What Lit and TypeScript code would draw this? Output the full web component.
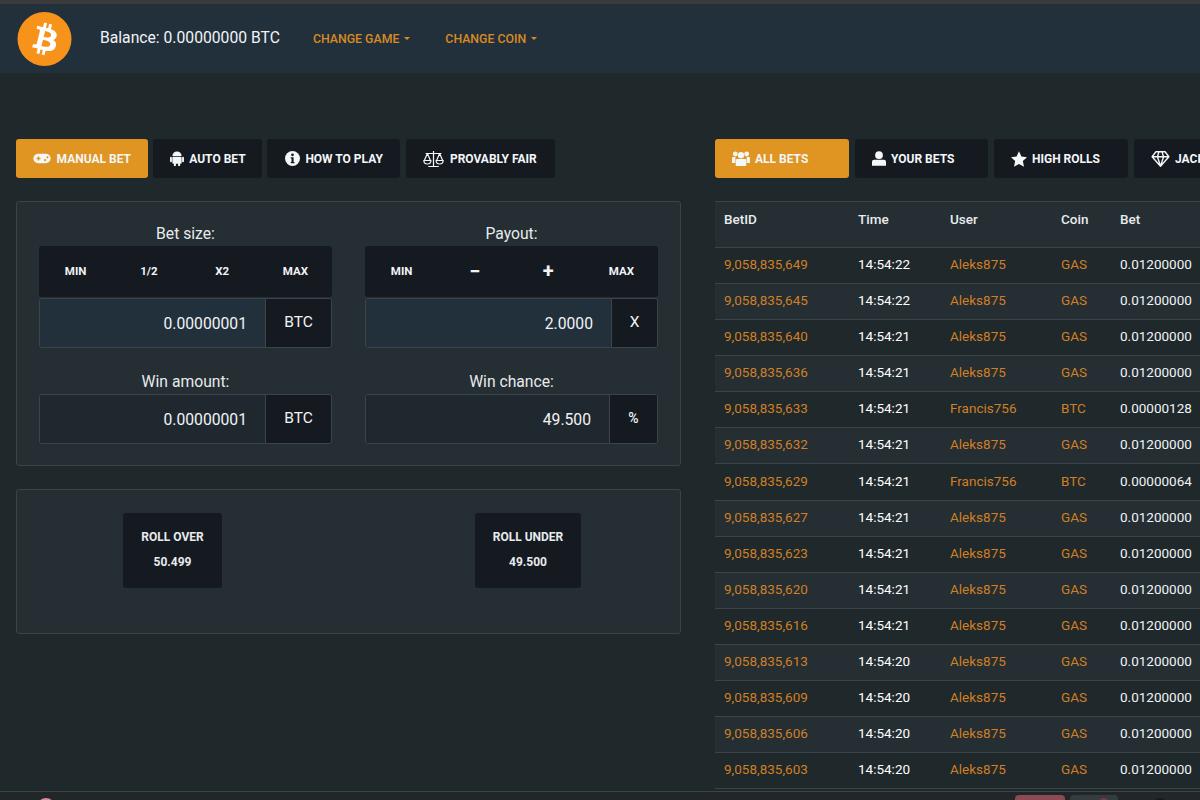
import { LitElement, html, css, svg } from 'lit';
import { customElement } from 'lit/decorators.js';

const BTC_PATH =
  'M23.2 14.02c.3-2.04-1.25-3.13-3.37-3.86l.69-2.76-1.68-.42-.67 2.69c-.44-.11-.9-.21-1.35-.32l.68-2.71-1.68-.42-.69 2.76c-.37-.08-.72-.16-1.07-.25l-2.32-.58-.45 1.8s1.25.29 1.22.3c.68.17.8.62.78.98l-.79 3.15c.05.01.11.03.18.06l-.18-.05-1.1 4.42c-.08.21-.3.52-.77.41.02.02-1.22-.3-1.22-.3l-.83 1.92 2.19.55c.41.1.81.21 1.2.31l-.7 2.79 1.68.42.69-2.76c.46.12.91.24 1.34.35l-.69 2.75 1.68.42.7-2.78c2.87.54 5.02.32 5.93-2.27.73-2.09-.04-3.29-1.54-4.07 1.09-.25 1.92-.97 2.14-2.45zm-3.84 5.38c-.52 2.09-4.04.96-5.18.68l.92-3.7c1.14.28 4.8.85 4.26 3.02zm.52-5.41c-.47 1.9-3.4.93-4.35.7l.84-3.36c.95.24 4 .68 3.51 2.66z';

// each icon keeps its own box, the glyphs are not all the same width
const ICONS = {
  game: {
    box: '1 5 22 14',
    w: 18,
    h: 11,
    body: svg`<rect x="1" y="6" width="22" height="12" rx="6" fill="currentColor"/><path d="M5 12h5M7.5 9.5v5" stroke="#e09422" stroke-width="1.6"/><circle cx="16" cy="14" r="1.4" fill="#e09422"/><circle cx="19" cy="10.5" r="1.4" fill="#e09422"/>`,
  },
  android: {
    box: '3 3 18 20',
    w: 14,
    h: 15.5,
    body: svg`<path d="M6 9.500a6 6 0 0 1 12 0z" fill="currentColor"/><rect x="6" y="10.500" width="12" height="9" rx="1.200" fill="currentColor"/><rect x="3" y="10.500" width="2.400" height="7" rx="1.200" fill="currentColor"/><rect x="18.600" y="10.500" width="2.400" height="7" rx="1.200" fill="currentColor"/><rect x="8" y="18" width="2.600" height="5" rx="1.300" fill="currentColor"/><rect x="13.400" y="18" width="2.600" height="5" rx="1.300" fill="currentColor"/>`,
  },
  info: {
    box: '1 1 22 22',
    w: 15,
    h: 15,
    body: svg`<circle cx="12" cy="12" r="11" fill="currentColor"/><circle cx="12" cy="6.600" r="2" fill="#151a21"/><path d="M9.400 10h4.200v7h1.200v2H9.400v-2h1.200v-5H9.400z" fill="#151a21"/>`,
  },
  scale: {
    box: '0 2 24 20',
    w: 21,
    h: 17.5,
    body: svg`<path d="M12 3v18M6 21h12M3 6h18M5 6 1.500 14M5 6l3.500 8M19 6l-3.500 8M19 6l3.500 8" stroke="currentColor" stroke-width="1.400" fill="none"/><path d="M1 14a4 4 0 0 0 8 0zM15 14a4 4 0 0 0 8 0z" fill="none" stroke="currentColor" stroke-width="1.400"/>`,
  },
  users: {
    box: '0 2 24 20',
    w: 18,
    h: 17,
    body: svg`<circle cx="12" cy="7.500" r="4.200" fill="currentColor"/><circle cx="4.400" cy="6" r="3.200" fill="currentColor"/><circle cx="19.600" cy="6" r="3.200" fill="currentColor"/><path d="M6.500 12.500h11a1.500 1.500 0 0 1 1.500 1.500v8H5v-8a1.500 1.500 0 0 1 1.500-1.500z" fill="currentColor"/><path d="M1.500 10h3v8H0v-6.500A1.500 1.500 0 0 1 1.500 10zM19.500 10h3a1.500 1.500 0 0 1 1.500 1.500V18h-4.500z" fill="currentColor"/>`,
  },
  user: {
    box: '2 1.500 20 20.500',
    w: 14,
    h: 15,
    body: svg`<circle cx="12" cy="7" r="5.500" fill="currentColor"/><path d="M5 13.500h14a3 3 0 0 1 3 3V22H2v-5.500a3 3 0 0 1 3-3z" fill="currentColor"/>`,
  },
  star: {
    box: '0.800 1 22.400 21.500',
    w: 16,
    h: 16,
    body: svg`<path d="m12 1 3.400 7.300 7.800.9-5.800 5.400 1.600 7.900L12 18.600l-7 3.900 1.600-7.900L.8 9.200l7.800-.9z" fill="currentColor"/>`,
  },
  diamond: {
    box: '0 2 24 21',
    w: 19,
    h: 16,
    body: svg`<path d="M6 3h12l5 6.500L12 22 1 9.500zM1 9.500h22M8 9.500 12 22l4-12.500M8 9.500 10 3M16 9.500 14 3" fill="none" stroke="currentColor" stroke-width="1.800" stroke-linejoin="round"/>`,
  },
};

type IconName = keyof typeof ICONS;

const LEFT_TABS: [string, IconName][] = [
  ['Manual bet', 'game'],
  ['Auto bet', 'android'],
  ['How to play', 'info'],
  ['Provably fair', 'scale'],
];

const RIGHT_TABS: [string, IconName][] = [
  ['All bets', 'users'],
  ['Your bets', 'user'],
  ['High rolls', 'star'],
  ['Jackpots', 'diamond'],
];

// id, time, user, coin, bet
const BETS: string[][] = [
  ['9,058,835,649', '14:54:22', 'Aleks875', 'GAS', '0.01200000'],
  ['9,058,835,645', '14:54:22', 'Aleks875', 'GAS', '0.01200000'],
  ['9,058,835,640', '14:54:21', 'Aleks875', 'GAS', '0.01200000'],
  ['9,058,835,636', '14:54:21', 'Aleks875', 'GAS', '0.01200000'],
  ['9,058,835,633', '14:54:21', 'Francis756', 'BTC', '0.00000128'],
  ['9,058,835,632', '14:54:21', 'Aleks875', 'GAS', '0.01200000'],
  ['9,058,835,629', '14:54:21', 'Francis756', 'BTC', '0.00000064'],
  ['9,058,835,627', '14:54:21', 'Aleks875', 'GAS', '0.01200000'],
  ['9,058,835,623', '14:54:21', 'Aleks875', 'GAS', '0.01200000'],
  ['9,058,835,620', '14:54:21', 'Aleks875', 'GAS', '0.01200000'],
  ['9,058,835,616', '14:54:21', 'Aleks875', 'GAS', '0.01200000'],
  ['9,058,835,613', '14:54:20', 'Aleks875', 'GAS', '0.01200000'],
  ['9,058,835,609', '14:54:20', 'Aleks875', 'GAS', '0.01200000'],
  ['9,058,835,606', '14:54:20', 'Aleks875', 'GAS', '0.01200000'],
  ['9,058,835,603', '14:54:20', 'Aleks875', 'GAS', '0.01200000'],
];

@customElement('app-root')
export class AppRoot extends LitElement {
  static styles = css`
    :host {
      display: block;
      width: 1200px;
      height: 800px;
      overflow: hidden;
      background: #1f282b;
      color: #f1f3f5;
      font-family: Roboto, 'Liberation Sans', sans-serif;
    }

    .page {
      display: flex;
      flex-direction: column;
      height: 800px;
      border-top: 4px solid #3b3b3b;
      box-sizing: border-box;
    }

    /* top bar */
    .topbar {
      flex: none;
      height: 69px;
      background: #22303c;
      display: flex;
      align-items: center;
      padding-left: 17px;
    }
    .logo {
      width: 55px;
      height: 54px;
      margin-top: 1px;
      display: block;
    }
    .balance {
      margin-left: 28px;
      font-size: 15.7px;
      margin-top: -3px;
      width: 213px;
    }
    .menu {
      font-size: 12.3px;
      font-weight: 500;
      color: #d98a22;
      text-transform: uppercase;
      display: flex;
      align-items: center;
      gap: 5px;
    }
    .menu + .menu {
      margin-left: 35px;
    }
    .caret {
      width: 0;
      height: 0;
      border-left: 3.5px solid transparent;
      border-right: 3.5px solid transparent;
      border-top: 3.5px solid #d98a22;
    }

    .main {
      flex: 1;
      min-height: 0;
      display: grid;
      grid-template-columns: 665px 1fr;
      column-gap: 34px;
      padding: 66px 0 0 16px;
      overflow: hidden;
    }

    /* tabs */
    .tabs {
      display: flex;
      gap: 5.2px;
      height: 39px;
      white-space: nowrap;
    }
    .tab {
      flex: none;
      display: flex;
      align-items: center;
      justify-content: center;
      gap: 5.5px;
      border-radius: 3px;
      background: #151a21;
      color: #f4f6f8;
      font-size: 12px;
      font-weight: 700;
      text-transform: uppercase;
    }
    .tab.active {
      background: #e09422;
    }
    .tab svg {
      display: block;
      flex: none;
    }

    /* panels */
    .panel {
      box-sizing: border-box;
      background: #242e33;
      border: 1px solid #3c4448;
      border-radius: 3px;
    }
    .bet-panel {
      margin-top: 23px;
      height: 265px;
      padding: 22px 22px 0;
      display: grid;
      grid-template-columns: 293px 293px;
      justify-content: space-between;
    }
    .field-label {
      font-size: 15.7px;
      line-height: 20px;
      text-align: center;
      color: #e8ebed;
    }
    .quick {
      box-sizing: border-box;
      height: 51px;
      margin-top: 2px;
      padding-bottom: 2px;
      display: grid;
      grid-template-columns: repeat(4, 1fr);
      align-items: center;
      justify-items: center;
      background: #151a21;
      border-radius: 3px;
      font-size: 11.5px;
      font-weight: 700;
    }
    .sign {
      font-size: 20px;
      line-height: 1;
    }
    .input {
      box-sizing: border-box;
      height: 50px;
      display: flex;
      margin-top: 1px;
      border: 1px solid #3c4448;
      border-radius: 3px;
      overflow: hidden;
    }
    .input.plain {
      margin-top: 2px;
    }
    .value {
      flex: 1;
      background: #22303c;
      display: flex;
      align-items: center;
      justify-content: flex-end;
      padding-right: 18px;
      font-size: 15.7px;
      border-right: 1px solid #3c4448;
    }
    .input.plain .value {
      background: #1f282e;
    }
    .unit {
      flex: none;
      width: 65px;
      background: #151a21;
      display: flex;
      align-items: center;
      justify-content: center;
      font-size: 15.5px;
      padding-bottom: 3px;
      box-sizing: border-box;
    }
    .unit.x {
      width: 45px;
    }
    .unit.pct {
      width: 47px;
      font-size: 14px;
      font-weight: 500;
    }
    .gap {
      height: 24px;
    }

    .roll-panel {
      margin-top: 23px;
      height: 145px;
      display: flex;
      padding: 23px 0 0 106px;
    }
    .roll {
      box-sizing: border-box;
      height: 75px;
      padding-bottom: 2px;
      background: #151a21;
      border-radius: 3px;
      font-size: 12px;
      font-weight: 700;
      color: #e8ebed;
      text-transform: uppercase;
      text-align: center;
      display: flex;
      flex-direction: column;
      justify-content: center;
      gap: 11px;
      line-height: 14px;
    }
    .roll.over {
      width: 99px;
    }
    .roll.under {
      width: 106px;
      margin-left: 253px;
    }

    /* bets table */
    .right {
      min-width: 0;
    }
    .right .tabs {
      width: 560px;
      gap: 6px;
    }
    .right .tab {
      justify-content: flex-start;
      padding-left: 16.5px;
      box-sizing: border-box;
    }
    table {
      margin-top: 23px;
      width: 560px;
      table-layout: fixed;
      border-collapse: collapse;
      font-size: 13.5px;
    }
    col.c-id { width: 134px; }
    col.c-time { width: 92px; }
    col.c-user { width: 111px; }
    col.c-coin { width: 59px; }
    th {
      height: 46px;
      box-sizing: border-box;
      background: #242e33;
      font-size: 13.5px;
      font-weight: 500;
      text-align: left;
      vertical-align: top;
      padding: 9px 0 0 9px;
      border-top: 1px solid #3c4448;
      border-bottom: 1px solid #3c4448;
      color: #e8ebed;
    }
    td {
      height: 36.08px;
      box-sizing: border-box;
      padding: 0 0 3px 9px;
      border-bottom: 1px solid #3c4448;
      white-space: nowrap;
    }
    tbody tr:nth-child(even) td {
      background: #242e33;
    }
    td.link {
      color: #d07f25;
    }
    td.time {
      color: #fff;
    }

    /* cut off by the bottom of the window */
    .footer {
      flex: none;
      height: 9px;
      box-sizing: border-box;
      background: #212628;
      border-top: 1px solid #3c4448;
      display: flex;
      overflow: hidden;
    }
    .dot {
      margin: 6px 0 0 37px;
      width: 18px;
      height: 18px;
      flex: none;
      border-radius: 50%;
      background: #d98c96;
    }
    .pill {
      height: 16px;
      margin-top: 3px;
      border-radius: 4px;
      width: 50px;
      flex: none;
      background: #8b4a55;
    }
    .pill.first {
      margin-left: 960px;
    }
    .pill.grey {
      margin-left: 5px;
      background: #343c40;
      width: 48px;
      display: flex;
      justify-content: flex-end;
      padding-right: 10px;
      box-sizing: border-box;
    }
    .blot {
      width: 9px;
      height: 9px;
      margin-top: 3px;
      border-radius: 50%;
      background: #7a3650;
    }
    .dark-dot {
      flex: none;
      width: 12px;
      height: 12px;
      margin: 6px 0 0 36px;
      border-radius: 50%;
      background: #14181b;
    }
  `;

  private tabs(items: [string, IconName][], widths: number[]) {
    return items.map(([label, name], i) => {
      const icon = ICONS[name];
      return html`
        <div
          class="tab ${i === 0 ? 'active' : ''}"
          style="width: ${widths[i]}px"
        >
          <svg viewBox=${icon.box} width=${icon.w} height=${icon.h} aria-hidden="true">${icon.body}</svg>
          ${label}
        </div>
      `;
    });
  }

  private input(value: string, unit: string, unitClass = '', plain = false) {
    return html`
      <div class="input ${plain ? 'plain' : ''}">
        <div class="value">${value}</div>
        <div class="unit ${unitClass}">${unit}</div>
      </div>
    `;
  }

  render() {
    return html`
      <div class="page">
        <header class="topbar">
          <svg class="logo" viewBox="0 0 32 32" aria-hidden="true">
            <circle cx="16" cy="16" r="16" fill="#f7931a" />
            <path d=${BTC_PATH} fill="#fff" />
          </svg>
          <div class="balance">Balance: 0.00000000 BTC</div>
          <div class="menu">Change game <span class="caret"></span></div>
          <div class="menu">Change coin <span class="caret"></span></div>
        </header>

        <div class="main">
          <section>
            <div class="tabs">${this.tabs(LEFT_TABS, [132, 109, 133, 149])}</div>

            <div class="panel bet-panel">
              <div>
                <div class="field-label">Bet size:</div>
                <div class="quick">
                  <span>MIN</span><span>1/2</span><span>X2</span><span>MAX</span>
                </div>
                ${this.input('0.00000001', 'BTC')}
                <div class="gap"></div>
                <div class="field-label">Win amount:</div>
                ${this.input('0.00000001', 'BTC', '', true)}
              </div>
              <div>
                <div class="field-label">Payout:</div>
                <div class="quick">
                  <span>MIN</span><span class="sign">−</span><span class="sign">+</span><span>MAX</span>
                </div>
                ${this.input('2.0000', 'X', 'x')}
                <div class="gap"></div>
                <div class="field-label">Win chance:</div>
                ${this.input('49.500', '%', 'pct', true)}
              </div>
            </div>

            <div class="panel roll-panel">
              <div class="roll over"><span>Roll over</span><span>50.499</span></div>
              <div class="roll under"><span>Roll under</span><span>49.500</span></div>
            </div>
          </section>

          <section class="right">
            <div class="tabs">${this.tabs(RIGHT_TABS, [134, 133, 134, 134])}</div>
            <table>
              <colgroup>
                <col class="c-id" /><col class="c-time" /><col class="c-user" /><col class="c-coin" /><col />
              </colgroup>
              <thead>
                <tr><th>BetID</th><th>Time</th><th>User</th><th>Coin</th><th>Bet</th></tr>
              </thead>
              <tbody>
                ${BETS.map(
                  ([id, time, user, coin, bet]) => html`
                    <tr>
                      <td class="link">${id}</td>
                      <td class="time">${time}</td>
                      <td class="link">${user}</td>
                      <td class="link">${coin}</td>
                      <td>${bet}</td>
                    </tr>
                  `
                )}
              </tbody>
            </table>
          </section>
        </div>

        <div class="footer">
          <div class="dot"></div>
          <div class="pill first"></div>
          <div class="pill grey"><span class="blot"></span></div>
          <div class="dark-dot"></div>
        </div>
      </div>
    `;
  }
}

declare global {
  interface HTMLElementTagNameMap {
    'app-root': AppRoot;
  }
}
